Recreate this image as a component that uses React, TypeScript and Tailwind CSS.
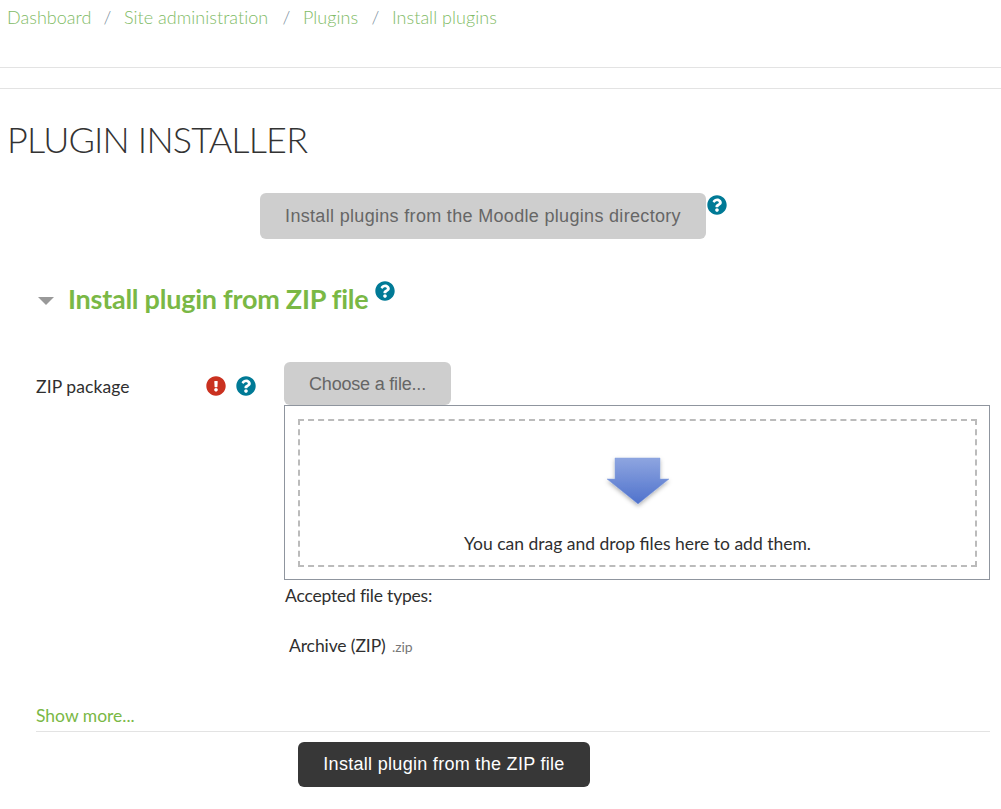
import { FaExclamationCircle, FaQuestionCircle } from "react-icons/fa";

const crumbs = [
  { label: "Dashboard", width: "w-[83px]" },
  { label: "Site administration", width: "w-[145px]" },
  { label: "Plugins", width: "w-[55px]" },
  { label: "Install plugins", width: "w-[106px]" },
];

const bodyFont = "font-['Lato',sans-serif]";
const buttonFont = "font-['Liberation_Sans',Arial,sans-serif]";

function HelpIcon({ className = "" }: { className?: string }) {
  return <FaQuestionCircle className={`h-5 w-5 text-[#007a96] ${className}`} />;
}

function DropArrow() {
  return (
    <svg width="72" height="58" viewBox="0 0 72 58" aria-hidden>
      <defs>
        <linearGradient id="arrowFill" x1="0" y1="0" x2="0" y2="1">
          <stop offset="0" stopColor="#8ea5e0" />
          <stop offset="1" stopColor="#4f72cc" />
        </linearGradient>
        <filter id="arrowShadow" x="-20%" y="-20%" width="140%" height="150%">
          <feDropShadow dx="0" dy="2" stdDeviation="2" floodColor="#000" floodOpacity="0.3" />
        </filter>
      </defs>
      <path d="M13 4H58V25H67L36 50L5 25H13Z" fill="url(#arrowFill)" stroke="#87a0dc" strokeWidth="0.5" filter="url(#arrowShadow)" />
    </svg>
  );
}

export default function App() {
  return (
    <div className={`${bodyFont} h-[809px] w-[1001px] overflow-hidden bg-white text-[#2f2f2f]`}>
      {/* Breadcrumb */}
      <nav className="flex h-[67px] items-start pl-[7px] pt-[6px] text-[18px] font-light leading-[22px] tracking-[0.03px] text-[#7fbb66]">
        {crumbs.map((c, i) => (
          <div key={c.label} className="flex">
            {i > 0 && <span className="w-[34px] pl-[1px] text-center text-[#7d8fa0]">/</span>}
            <span className={`${c.width} whitespace-nowrap`}>{c.label}</span>
          </div>
        ))}
      </nav>
      <div className="h-[22px] border-y border-[#e3e3e3]" />

      <h1 className="mt-[27px] pl-[7px] text-[36px] font-light leading-[46px] tracking-[-0.85px] text-[#333]">PLUGIN INSTALLER</h1>

      {/* Directory button */}
      <div className="mt-[31px] flex items-start pl-[260px]">
        <button className={`${buttonFont} h-[46px] w-[446px] rounded-[6px] bg-[#cecece] text-[18px] tracking-[0.32px] text-[#666]`}>
          Install plugins from the Moodle plugins directory
        </button>
        <HelpIcon className="ml-[1px] mt-[2px]" />
      </div>

      {/* Section */}
      <div className="mt-[43px] flex h-[36px] items-start pl-[38px]">
        <div className="mt-[15px] h-0 w-0 border-x-[8px] border-t-[8px] border-x-transparent border-t-[#999]" />
        <h2 className="-mt-[1px] ml-[14px] w-[307px] whitespace-nowrap text-[27px] font-bold leading-[36px] tracking-[-0.25px] text-[#7ab845]">
          Install plugin from ZIP file
        </h2>
        <HelpIcon className="-mt-[1px]" />
      </div>

      {/* ZIP package row */}
      <div className="mt-[44px] flex items-start">
        <div className="flex w-[284px] items-start pl-[36px] pt-[14px]">
          <span className="w-[170px] text-[17.5px] leading-[22px] tracking-[0.1px]">ZIP package</span>
          <FaExclamationCircle className="h-5 w-5 text-[#ca3120]" />
          <HelpIcon className="ml-[10px]" />
        </div>
        <div className="w-[706px]">
          <button className={`${buttonFont} block h-[43px] w-[167px] rounded-[6px] bg-[#cecece] pt-[1px] text-[18px] tracking-[-0.2px] text-[#666]`}>
            Choose a file...
          </button>
          <div className="h-[175px] border border-[#8f959e] py-[13px] pl-[13px] pr-[12px]">
            <div className="flex h-[148px] flex-col items-center border-2 border-dashed border-[#bbb]">
              <div className="ml-[1px] mt-[33px] h-[58px]">
                <DropArrow />
              </div>
              <p className="mt-[21px] text-[17.5px] leading-[22px]">You can drag and drop files here to add them.</p>
            </div>
          </div>
          <p className="mt-[5px] pl-[1px] text-[17.5px] leading-[22px] tracking-[-0.2px]">Accepted file types:</p>
          <p className="mt-[28px] pl-[5px] text-[17.5px] leading-[22px] tracking-[-0.1px]">
            Archive (ZIP) <span className="ml-[2px] text-[14px] text-[#777]">.zip</span>
          </p>
        </div>
      </div>

      {/* Footer */}
      <div className="ml-[36px] mr-[11px] mt-[47px] h-[27px] border-b border-[#e3e3e3] text-[17.5px] leading-[22px] text-[#7ab845]">
        Show more...
      </div>
      <div className="mt-[10px] pl-[298px]">
        <button className={`${buttonFont} h-[45px] w-[292px] rounded-[6px] bg-[#373737] text-[18px] tracking-[0.3px] text-white`}>
          Install plugin from the ZIP file
        </button>
      </div>
    </div>
  );
}
